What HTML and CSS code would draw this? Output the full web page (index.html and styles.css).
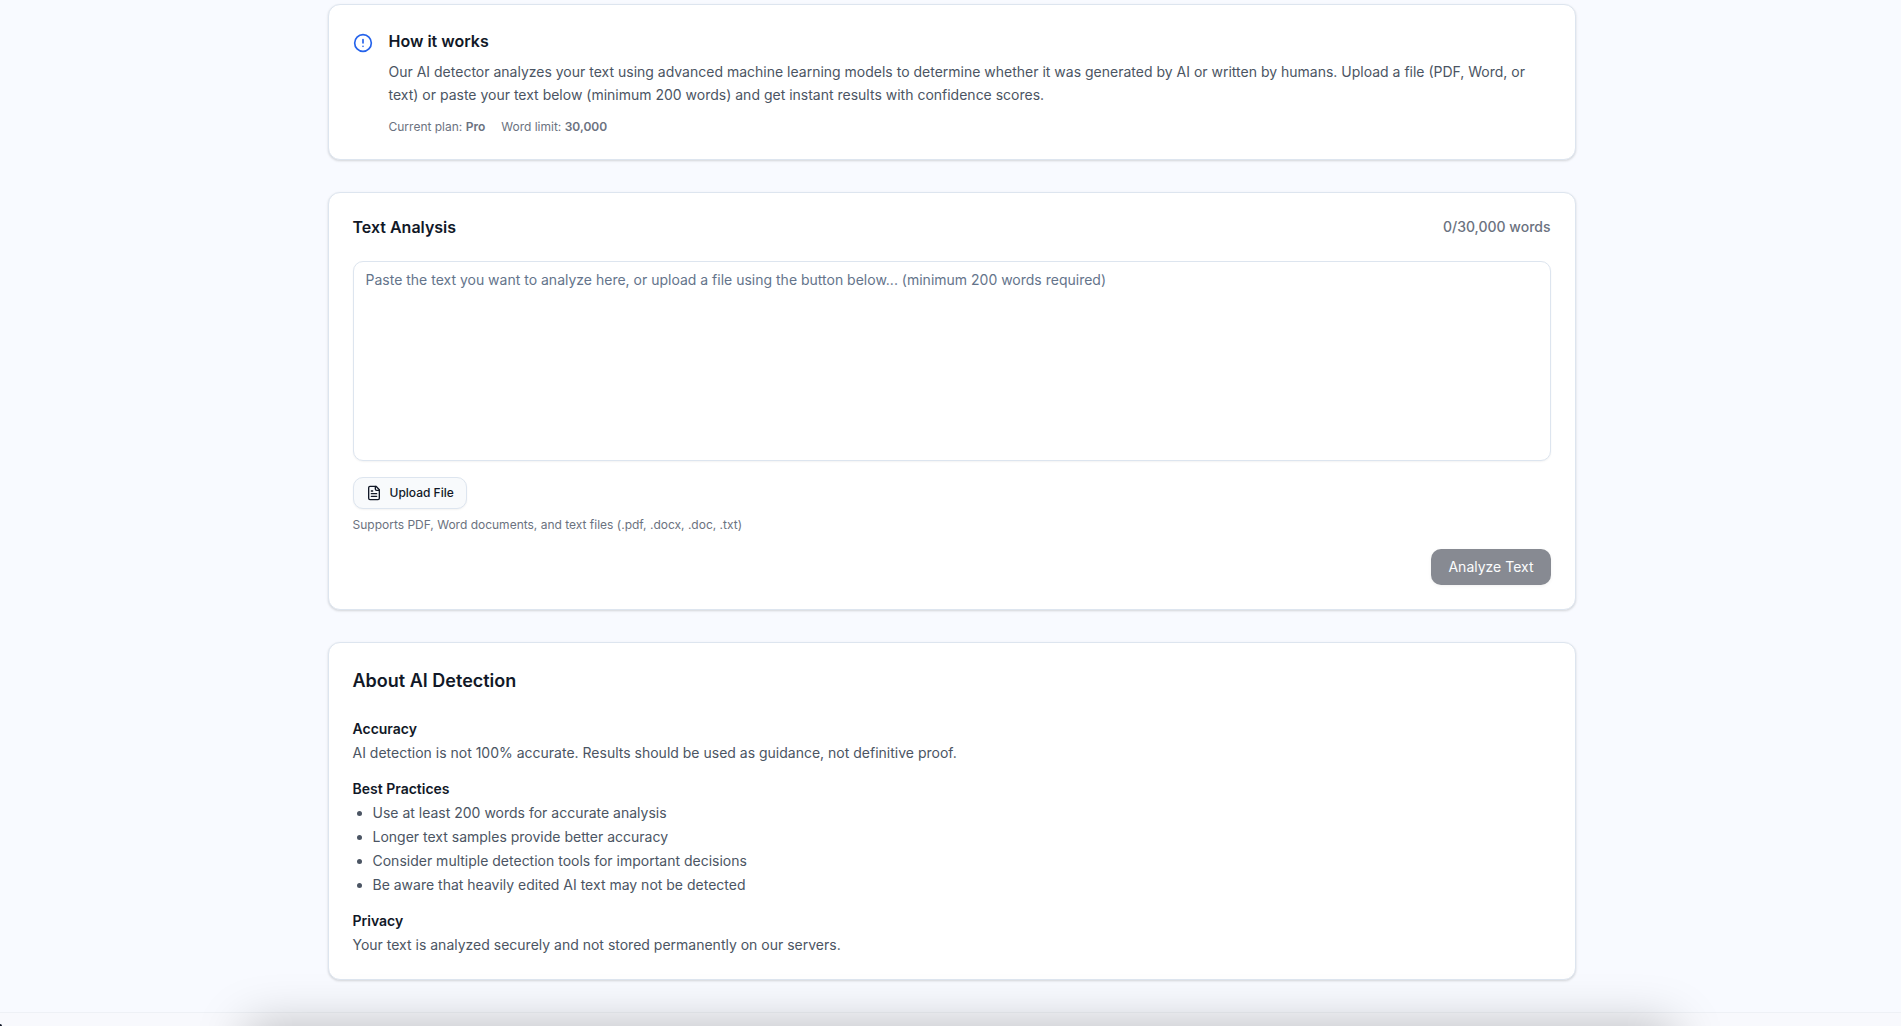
FILE: index.html
```
<!DOCTYPE html>
<html lang="en">
<head>
  <meta charset="UTF-8">
  <meta name="viewport" content="width=device-width, initial-scale=1.0">
  <title>AI Detector</title>
  <link rel="stylesheet" href="styles.css">
</head>
<body>
<main class="page">
  <section class="card info">
    <svg class="info-icon" viewBox="0 0 24 24" aria-hidden="true">
      <circle cx="12" cy="12" r="10"/>
      <path d="M12 8v4"/>
      <path d="M12 16h.01"/>
    </svg>
    <div>
      <h2 class="info-title">How it works</h2>
      <p class="info-text">Our AI detector analyzes your text using advanced machine learning models to determine whether it was generated by AI or written by humans. Upload a file (PDF, Word, or text) or paste your text below (minimum 200 words) and get instant results with confidence scores.</p>
      <div class="info-meta">
        <span>Current plan: <strong>Pro</strong></span>
        <span>Word limit: <strong>30,000</strong></span>
      </div>
    </div>
  </section>

  <form class="card analysis">
    <div class="analysis-head">
      <label class="analysis-title" for="text">Text Analysis</label>
      <span class="word-count">0/30,000 words</span>
    </div>
    <textarea id="text" class="text-input" placeholder="Paste the text you want to analyze here, or upload a file using the button below... (minimum 200 words required)"></textarea>
    <div class="upload">
      <button type="button" class="upload-btn">
        <svg class="upload-icon" viewBox="0 0 24 24" aria-hidden="true">
          <path d="M15 2H6a2 2 0 0 0-2 2v16a2 2 0 0 0 2 2h12a2 2 0 0 0 2-2V7Z"/>
          <path d="M14 2v4a2 2 0 0 0 2 2h4"/>
          <path d="M10 9H8"/>
          <path d="M16 13H8"/>
          <path d="M16 17H8"/>
        </svg>
        Upload File
      </button>
      <p class="upload-hint">Supports PDF, Word documents, and text files (.pdf, .docx, .doc, .txt)</p>
    </div>
    <button type="submit" class="analyze-btn" disabled>Analyze Text</button>
  </form>

  <section class="card about">
    <h2 class="about-title">About AI Detection</h2>
    <div class="about-body">
      <div class="about-item">
        <h3>Accuracy</h3>
        <p>AI detection is not 100% accurate. Results should be used as guidance, not definitive proof.</p>
      </div>
      <div class="about-item">
        <h3>Best Practices</h3>
        <ul>
          <li>Use at least 200 words for accurate analysis</li>
          <li>Longer text samples provide better accuracy</li>
          <li>Consider multiple detection tools for important decisions</li>
          <li>Be aware that heavily edited AI text may not be detected</li>
        </ul>
      </div>
      <div class="about-item">
        <h3>Privacy</h3>
        <p>Your text is analyzed securely and not stored permanently on our servers.</p>
      </div>
    </div>
  </section>
</main>
<footer class="footer"></footer>
<!-- docked panel, only its shadow shows above the fold -->
<div class="dock"></div>
<div class="corner-dot"></div>
</body>
</html>
```
FILE: styles.css
```
* {
  box-sizing: border-box;
}

body {
  margin: 0;
  height: 100vh;
  overflow: hidden;
  background: #f8faff;
  color: #111827;
  font-family: Inter, "Liberation Sans", sans-serif;
  font-size: 14px;
  line-height: 20px;
}

h2, h3, p, ul {
  margin: 0;
}

.page {
  display: flex;
  flex-direction: column;
  gap: 32px;
  max-width: 1280px;
  margin: 0 auto;
  padding: 4px 15px 32px 17px;
}

.card {
  padding: 24px;
  background: #fff;
  border: 1px solid #dde5ef;
  border-radius: 12px;
  box-shadow: 0 1px 3px rgba(0, 0, 0, 0.1), 0 1px 2px rgba(0, 0, 0, 0.06);
}

/* How it works */
.info {
  display: flex;
  align-items: flex-start;
  gap: 16px;
}

.info-icon {
  flex: none;
  width: 20px;
  height: 20px;
  margin-top: 4px;
  fill: none;
  stroke: #2563eb;
  stroke-width: 2;
  stroke-linecap: round;
  stroke-linejoin: round;
}

.info-title {
  margin-bottom: 7px;
  font-size: 16px;
  font-weight: 600;
  line-height: 24px;
}

.info-text {
  margin-bottom: 13px;
  color: #4b5563;
  line-height: 23px;
}

.info-meta {
  display: flex;
  gap: 16px;
  color: #6b7280;
  font-size: 12px;
  line-height: 16px;
}

.info-meta strong {
  font-weight: 600;
}

/* Text analysis */
.analysis {
  display: flex;
  flex-direction: column;
  gap: 16px;
}

.analysis-head {
  display: flex;
  justify-content: space-between;
  margin-bottom: 8px;
}

.analysis-title {
  font-size: 16px;
  font-weight: 600;
}

.word-count {
  color: #6b7280;
  font-weight: 500;
}

.text-input {
  display: block;
  width: 100%;
  height: 200px;
  padding: 8px 12px;
  background: #fff;
  border: 1px solid #dde5ef;
  border-radius: 10px;
  box-shadow: 0 1px 2px rgba(0, 0, 0, 0.05);
  color: inherit;
  font: inherit;
  resize: none;
}

.text-input::placeholder {
  color: #64748b;
}

.upload {
  display: flex;
  flex-direction: column;
  align-items: flex-start;
  gap: 8px;
}

.upload-btn {
  display: inline-flex;
  align-items: center;
  gap: 8px;
  height: 32px;
  padding: 0 12px;
  background: #f8fafc;
  border: 1px solid #dde5ef;
  border-radius: 10px;
  box-shadow: 0 1px 2px rgba(0, 0, 0, 0.05);
  color: #111827;
  font: inherit;
  font-size: 12px;
  font-weight: 500;
  cursor: pointer;
}

.upload-icon {
  width: 16px;
  height: 16px;
  fill: none;
  stroke: currentColor;
  stroke-width: 2;
  stroke-linecap: round;
  stroke-linejoin: round;
}

.upload-hint {
  color: #6b7280;
  font-size: 12px;
  line-height: 16px;
}

.analyze-btn {
  align-self: flex-end;
  height: 36px;
  padding: 0 17px;
  background: #111827;
  border: none;
  border-radius: 10px;
  box-shadow: 0 1px 3px rgba(0, 0, 0, 0.1);
  color: #f8fafc;
  font: inherit;
}

.analyze-btn:disabled {
  opacity: 0.5;
}

/* About */
.about-title {
  margin-bottom: 24px;
  font-size: 18px;
  font-weight: 600;
  line-height: 28px;
}

.about-body {
  display: flex;
  flex-direction: column;
  gap: 16px;
  color: #4b5563;
}

.about-item h3 {
  margin-bottom: 4px;
  color: #111827;
  font-size: 14px;
  font-weight: 600;
}

.about-item ul {
  display: flex;
  flex-direction: column;
  gap: 4px;
  padding-left: 20px;
}

.footer {
  height: 64px;
  background: #f8f9fd;
  border-top: 1px solid #eef1f6;
}

.dock {
  position: fixed;
  top: 100%;
  left: 13%;
  right: 12%;
  height: 80px;
  box-shadow: 0 0 50px rgba(0, 0, 0, 0.25);
}

.corner-dot {
  position: fixed;
  bottom: -4px;
  left: -4px;
  width: 6px;
  height: 6px;
  background: #111827;
  border-radius: 2px;
}
```
